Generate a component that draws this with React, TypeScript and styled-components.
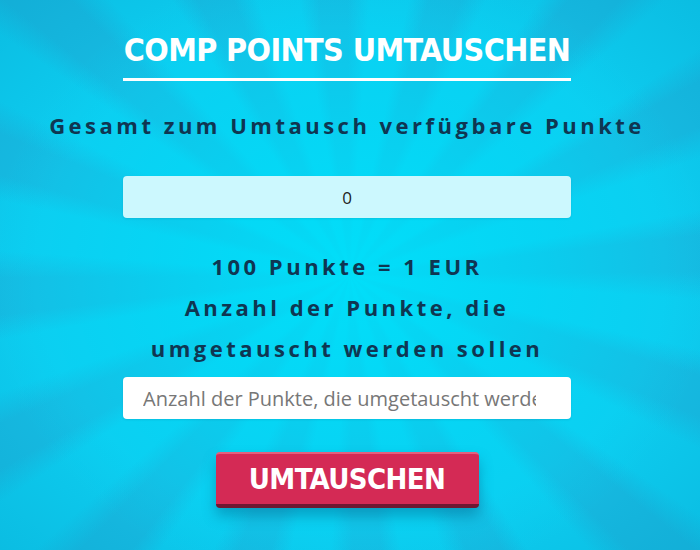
import React from "react";
import styled, { createGlobalStyle } from "styled-components";

const Global = createGlobalStyle`
  html, body { margin: 0; padding: 0; }
  body { width: 700px; height: 550px; overflow: hidden; }
  * { box-sizing: border-box; }
`;

const Page = styled.div`
  width: 700px;
  height: 550px;
  position: relative;
  overflow: hidden;
  background:
    radial-gradient(ellipse 52% 58% at 50% 50%, rgba(0, 224, 250, 0.92) 0%, rgba(0, 220, 248, 0.55) 50%, rgba(0, 205, 240, 0) 100%),
    radial-gradient(ellipse 75% 75% at 50% 50%, rgba(0, 110, 160, 0) 60%, rgba(0, 100, 150, 0.18) 100%),
    repeating-conic-gradient(from 4deg at 50% 50%, #0dcdf0 0deg, #0dcdf0 8deg, #16bce3 12deg, #16bce3 18deg, #0dcdf0 22.5deg);
  display: flex;
  flex-direction: column;
  align-items: center;
  padding: 30px 6px 0 0;
  font-family: "Open Sans", "Noto Sans", sans-serif;
`;

const Title = styled.h1`
  margin: 0;
  width: 448px;
  text-align: center;
  color: #ffffff;
  font-family: "DejaVu Sans Condensed", "DejaVu Sans", sans-serif;
  font-weight: 700;
  font-size: 32px;
  line-height: 40px;
  letter-spacing: -0.6px;
  padding-bottom: 8px;
  border-bottom: 3px solid #ffffff;
`;

const Label = styled.p<{ $mt?: number }>`
  margin: ${(p) => p.$mt ?? 0}px 0 0;
  text-align: center;
  color: #0f3652;
  font-weight: 700;
  font-size: 22px;
  line-height: 41px;
  letter-spacing: 3.5px;
  white-space: nowrap;
`;

const Field = styled.input<{ $tone: "light" | "white" }>`
  display: block;
  width: 448px;
  height: 42px;
  border: none;
  border-radius: 4px;
  outline: none;
  font-family: "Open Sans", "Noto Sans", sans-serif;
  background: ${(p) => (p.$tone === "light" ? "#ccf8fe" : "#ffffff")};
  color: #222;
  font-size: ${(p) => (p.$tone === "light" ? 17 : 20)}px;
  text-align: ${(p) => (p.$tone === "light" ? "center" : "left")};
  padding: ${(p) => (p.$tone === "light" ? "0 12px" : "0 35px 0 20px")};
  box-shadow: 0 1px 2px rgba(0, 60, 90, 0.12);
  &::placeholder { color: #777777; opacity: 1; }
`;

const Button = styled.button`
  margin-top: 33px;
  width: 263px;
  height: 56px;
  border: none;
  border-radius: 4px;
  background: #d42a55;
  border-top: 2px solid #e2607e;
  border-bottom: 4px solid #6e1832;
  color: #fff;
  font-family: "DejaVu Sans Condensed", "DejaVu Sans", sans-serif;
  font-weight: 700;
  font-size: 29px;
  letter-spacing: -0.6px;
  box-shadow: 0 8px 14px rgba(0, 70, 110, 0.35);
  cursor: pointer;
`;

export default function App() {
  return (
    <>
      <Global />
      <Page>
        <Title>COMP POINTS UMTAUSCHEN</Title>
        <Label $mt={24}>Gesamt zum Umtausch verfügbare Punkte</Label>
        <div style={{ height: 30 }} />
        <Field $tone="light" readOnly value="0" />
        <Label $mt={28}>
          100 Punkte = 1 EUR
          <br />
          Anzahl der Punkte, die
          <br />
          umgetauscht werden sollen
        </Label>
        <div style={{ height: 8 }} />
        <Field $tone="white" placeholder="Anzahl der Punkte, die umgetauscht werden sollen" />
        <Button>UMTAUSCHEN</Button>
      </Page>
    </>
  );
}
